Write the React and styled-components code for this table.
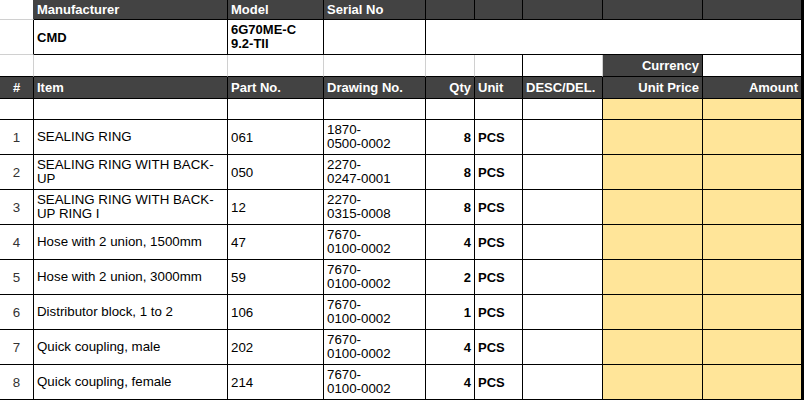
import React from 'react';
import styled, { createGlobalStyle } from 'styled-components';

const GlobalStyle = createGlobalStyle`
  html, body {
    margin: 0;
    padding: 0;
    background: #ffffff;
    overflow: hidden;
  }
  body {
    font-family: "Liberation Sans", Arial, sans-serif;
  }
`;

const DARK = '#434343';
const YELLOW = '#ffe599';
const GRID = '#d0d0d0';

const Sheet = styled.div`
  display: grid;
  grid-template-columns: 34px 194px 96px 102px 49px 48px 80px 100px 101px;
  grid-template-rows: 20px 35px 22px 22px 21px repeat(8, 35px);
  width: 804px;
  font-size: 13.3px;
  color: #000;
`;

const Cell = styled.div`
  box-sizing: border-box;
  display: flex;
  align-items: center;
  justify-content: ${p => p.$align === 'right' ? 'flex-end' : p.$align === 'center' ? 'center' : 'flex-start'};
  padding: 0 3px;
  background: ${p => p.$bg || '#ffffff'};
  border-right: ${p => (p.$last ? 3 : 1)}px solid ${p => p.$rb || '#000'};
  border-bottom: 1px solid ${p => p.$bb || '#000'};
  grid-column: ${p => p.$span ? `span ${p.$span}` : 'auto'};
  font-weight: ${p => p.$bold ? 700 : 400};
  font-size: ${p => p.$bold ? '13px' : '13.3px'};
  color: ${p => p.$head ? '#ffffff' : p.$muted ? '#333333' : '#000000'};
  white-space: nowrap;
  overflow: hidden;
`;

const Text = styled.span`
  display: block;
  line-height: 14px;
`;

const HeadCell = (props) => <Cell $bg={DARK} $head $bold {...props} />;

const lines = (v) => Array.isArray(v)
  ? v.map((l, i) => <React.Fragment key={i}>{i > 0 && <br />}{l}</React.Fragment>)
  : v;

const rows = [
  ['1', 'SEALING RING', '061', ['1870-', '0500-0002'], '8'],
  ['2', ['SEALING RING WITH BACK-', 'UP'], '050', ['2270-', '0247-0001'], '8'],
  ['3', ['SEALING RING WITH BACK-', 'UP RING I'], '12', ['2270-', '0315-0008'], '8'],
  ['4', 'Hose with 2 union, 1500mm', '47', ['7670-', '0100-0002'], '4'],
  ['5', 'Hose with 2 union, 3000mm', '59', ['7670-', '0100-0002'], '2'],
  ['6', 'Distributor block, 1 to 2', '106', ['7670-', '0100-0002'], '1'],
  ['7', 'Quick coupling, male', '202', ['7670-', '0100-0002'], '4'],
  ['8', 'Quick coupling, female', '214', ['7670-', '0100-0002'], '4'],
];

export default function App() {
  return (
    <>
      <GlobalStyle />
      <Sheet>
        {/* row 0: info header */}
        <Cell $rb={DARK} $bb={GRID} />
        <HeadCell>Manufacturer</HeadCell>
        <HeadCell>Model</HeadCell>
        <HeadCell>Serial No</HeadCell>
        <HeadCell />
        <HeadCell />
        <HeadCell />
        <HeadCell />
        <HeadCell $last />

        {/* row 1: info values */}
        <Cell $bb={GRID} />
        <Cell $bold>CMD</Cell>
        <Cell $bold><Text>{lines(['6G70ME-C', '9.2-TII'])}</Text></Cell>
        <Cell />
        <Cell $span={5} $last />

        {/* row 2: spacer + currency */}
        <Cell $rb={GRID} />
        <Cell $rb={GRID} />
        <Cell $rb={GRID} />
        <Cell $rb={GRID} />
        <Cell $rb={GRID} />
        <Cell />
        <Cell $rb={GRID} />
        <HeadCell $align="right">Currency</HeadCell>
        <Cell $last />

        {/* row 3: column headers */}
        <HeadCell $align="center">#</HeadCell>
        <HeadCell>Item</HeadCell>
        <HeadCell>Part No.</HeadCell>
        <HeadCell>Drawing No.</HeadCell>
        <HeadCell $align="right">Qty</HeadCell>
        <HeadCell>Unit</HeadCell>
        <HeadCell>DESC/DEL.</HeadCell>
        <HeadCell $align="right">Unit Price</HeadCell>
        <HeadCell $align="right" $last>Amount</HeadCell>

        {/* row 4: empty */}
        <Cell />
        <Cell />
        <Cell />
        <Cell />
        <Cell />
        <Cell />
        <Cell />
        <Cell $bg={YELLOW} />
        <Cell $bg={YELLOW} $last />

        {rows.map(([n, item, part, drawing, qty]) => (
          <React.Fragment key={n}>
            <Cell $align="center" $muted>{n}</Cell>
            <Cell><Text>{lines(item)}</Text></Cell>
            <Cell>{part}</Cell>
            <Cell><Text>{lines(drawing)}</Text></Cell>
            <Cell $align="right" $bold>{qty}</Cell>
            <Cell $bold>PCS</Cell>
            <Cell />
            <Cell $bg={YELLOW} />
            <Cell $bg={YELLOW} $last />
          </React.Fragment>
        ))}
      </Sheet>
    </>
  );
}
